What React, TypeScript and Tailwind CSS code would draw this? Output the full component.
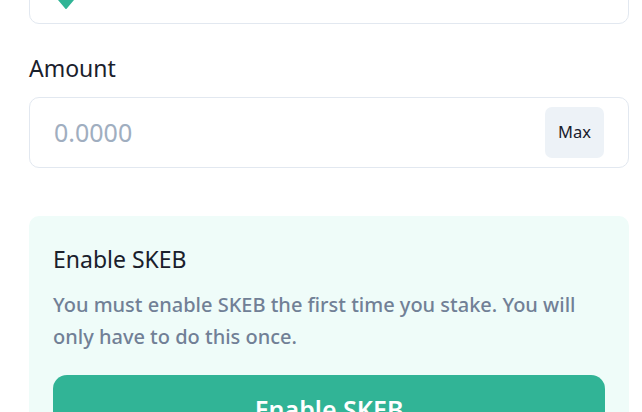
import React from "react";

export default function App() {
  return (
    <div
      className="w-[642px] h-[412px] overflow-hidden bg-white pl-[29px] pr-[13px]"
      style={{ fontFamily: '"Noto Sans", "Open Sans", sans-serif' }}
    >
      <div className="-mt-[36px] h-[60px] rounded-[10px] border border-[#e2e8f0] bg-white relative">
        <svg
          className="absolute left-[27px] top-[35px]"
          width="18"
          height="11"
          viewBox="0 0 18 11"
        >
          <path d="M1 0 H17 L9.8 8.6 Q9 9.6 8.2 8.6 Z" fill="#31b496" />
        </svg>
      </div>

      <div className="mt-[28px] text-[23px] leading-[33px] text-[#1a202c]">Amount</div>

      <div className="mt-[12px] h-[71px] rounded-[10px] border border-[#e2e8f0] flex items-center pl-[24px] pr-[24px]">
        <input
          className="flex-1 min-w-0 bg-transparent outline-none text-[25px] text-[#1a202c] placeholder:text-[#a0aec0]"
          placeholder="0.0000"
        />
        <button className="w-[59px] h-[51px] rounded-[7px] bg-[#edf2f7] text-[16.5px] text-[#1a202c] flex items-center justify-center">
          Max
        </button>
      </div>

      <div className="mt-[48px] rounded-[10px] bg-[#effcf9] px-[24px] pt-[27px] pb-[24px]">
        <div className="text-[23px] leading-[33px] text-[#1a202c]">Enable SKEB</div>
        <p className="mt-[13px] text-[20px] leading-[32px] font-medium text-[#718096]">
          You must enable SKEB the first time you stake. You will only have to do this once.
        </p>
        <button className="mt-[22px] w-full rounded-[14px] bg-[#31b496] py-4 text-[25px] leading-[36px] font-semibold text-white">
          Enable SKEB
        </button>
      </div>
    </div>
  );
}
